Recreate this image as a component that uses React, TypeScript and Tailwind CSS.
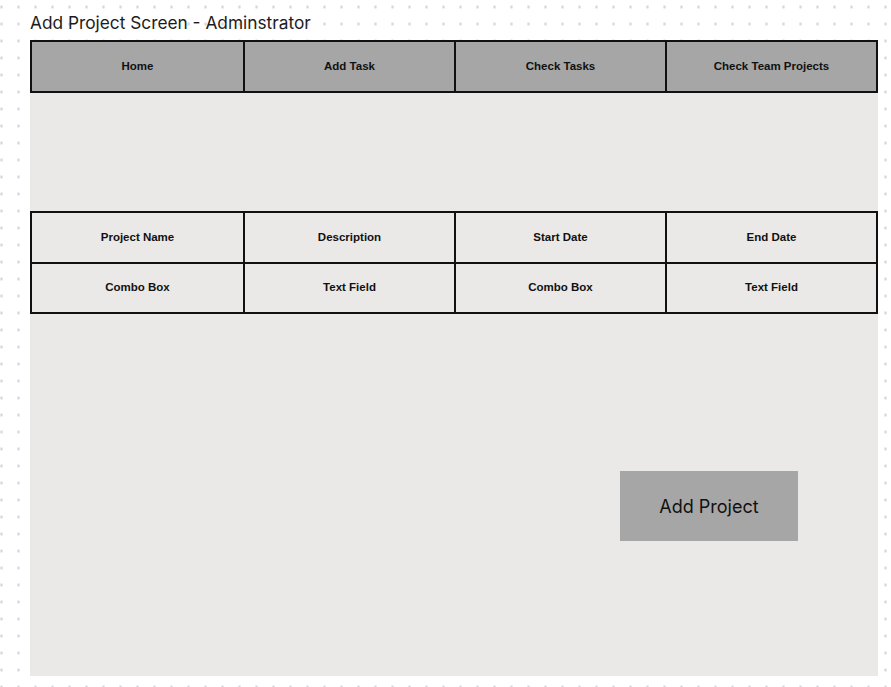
const navItems = ["Home", "Add Task", "Check Tasks", "Check Team Projects"];
const headers = ["Project Name", "Description", "Start Date", "End Date"];
const fields = ["Combo Box", "Text Field", "Combo Box", "Text Field"];

export default function App() {
  return (
    <div className="w-[891px] h-[687px] overflow-hidden bg-white bg-[radial-gradient(circle,#d6d9e1_1.2px,transparent_1.6px)] bg-[length:17px_17px] bg-[position:-7px_-1.5px] font-['Inter',sans-serif]">
      <div className="pl-[30px] pt-[12px]">
        <h1 className="h-[28px] text-[17.3px] leading-[22px] font-normal text-[#1c1c1c]">
          Add Project Screen - Adminstrator
        </h1>
        {/* Canvas panel */}
        <div className="w-[848px] h-[636px] bg-[#ebe9e7]">
          {/* Navigation */}
          <div className="grid grid-cols-4 border-2 border-[#111] bg-[#a6a6a6]">
            {navItems.map((item, i) => (
              <div
                key={item}
                className={`h-[49px] flex items-center justify-center text-[11.5px] font-bold text-[#111] font-['Liberation_Sans',sans-serif] ${i > 0 ? "border-l-2 border-[#111]" : ""}`}
              >
                {item}
              </div>
            ))}
          </div>

          {/* Form table */}
          <div className="mt-[118px] grid grid-cols-4 border-2 border-[#111]">
            {headers.map((h, i) => (
              <div
                key={h}
                className={`h-[51px] flex items-center justify-center text-[11.5px] font-bold text-[#111] font-['Liberation_Sans',sans-serif] border-b-2 border-[#111] ${i > 0 ? "border-l-2" : ""}`}
              >
                {h}
              </div>
            ))}
            {fields.map((f, i) => (
              <div
                key={i}
                className={`h-[48px] flex items-center justify-center text-[11.5px] font-bold text-[#111] font-['Liberation_Sans',sans-serif] border-[#111] ${i > 0 ? "border-l-2" : ""}`}
              >
                {f}
              </div>
            ))}
          </div>

          <div className="mt-[157px] ml-[590px] w-[178px] h-[70px] bg-[#a6a6a6] flex items-center justify-center text-[18px] font-normal text-[#111]">
            Add Project
          </div>
        </div>
      </div>
    </div>
  );
}
